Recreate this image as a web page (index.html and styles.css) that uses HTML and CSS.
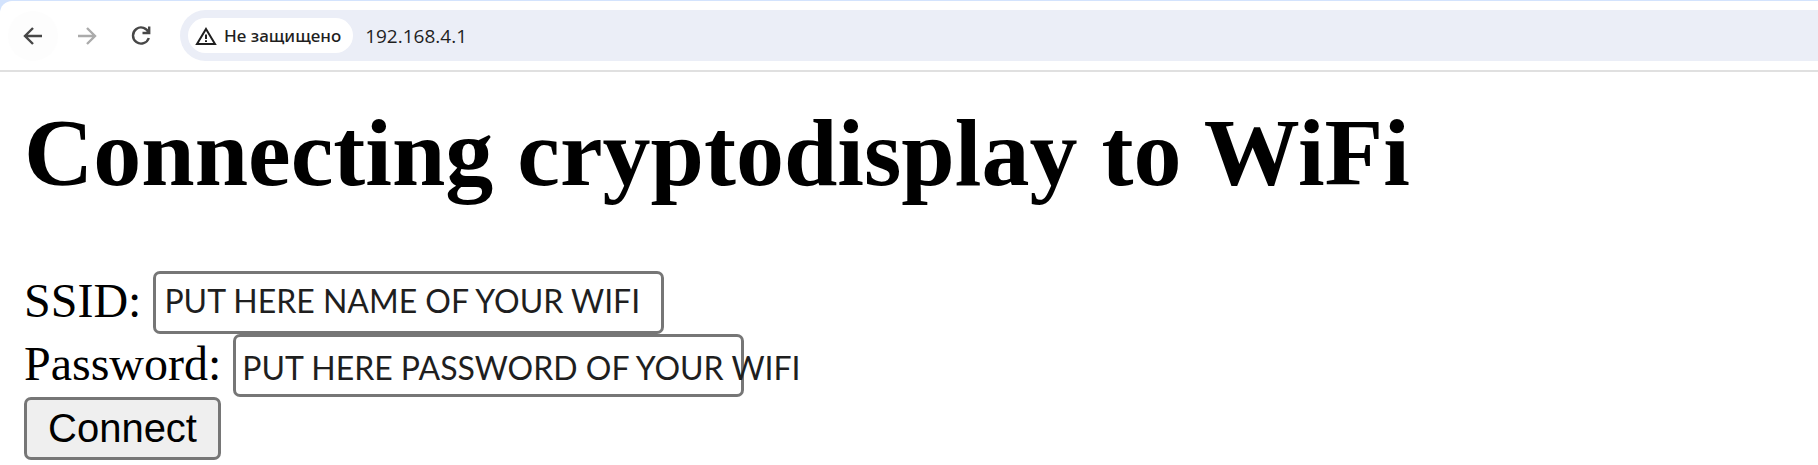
FILE: index.html
```html
<!DOCTYPE html>
<html lang="en">
<head>
<meta charset="utf-8">
<meta name="viewport" content="width=device-width, initial-scale=1">
<title>Connecting cryptodisplay to WiFi</title>
<link rel="stylesheet" href="styles.css">
</head>
<body>
<header class="browser">
  <nav class="toolbar" aria-label="Browser">
    <div class="nav-buttons">
      <button class="nav-button nav-button-current" type="button" aria-label="Back">
        <svg viewBox="0 0 20 20" width="20" height="20"><path d="M19 10H2.500M10 2L2 10l8 8"/></svg>
      </button>
      <button class="nav-button nav-button-off" type="button" aria-label="Forward" disabled>
        <svg viewBox="0 0 20 20" width="20" height="20"><path d="M1 10H17.500M10 2l8 8-8 8"/></svg>
      </button>
      <button class="nav-button" type="button" aria-label="Reload">
        <svg viewBox="0 0 20 20" width="20" height="20"><path d="M17.800 12A8.100 8.100 0 1 1 17.800 7M18.200 .500v6.500H11.500"/></svg>
      </button>
    </div>
    <div class="address">
      <button class="chip" type="button">
        <svg viewBox="0 0 22 18" width="22" height="18"><path d="M11 2L20 17H2Z"/><path d="M11 7.500v4.500M11 13.200v1.800"/></svg>
        <span lang="ru">Не защищено</span>
      </button>
      <input class="url" type="text" value="192.168.4.1" aria-label="Address">
    </div>
  </nav>
</header>
<main class="page">
  <h1 class="title">Connecting cryptodisplay to WiFi</h1>
  <form class="form">
    <div class="row">
      <label class="label" for="ssid">SSID:</label>
      <input class="field" id="ssid" type="text" value="PUT HERE NAME OF YOUR WIFI">
    </div>
    <div class="row">
      <label class="label" for="password">Password:</label>
      <div class="field-box">
        <input class="field" id="password" type="text" aria-describedby="password-note">
        <span class="note" id="password-note">PUT HERE PASSWORD OF YOUR WIFI</span>
      </div>
    </div>
    <button class="connect" type="button">Connect</button>
  </form>
</main>
</body>
</html>
```
FILE: styles.css
```css
* { box-sizing: border-box; }

body {
  margin: 0;
  background: #fff;
  color: #000;
  font-family: "Liberation Serif", "Times New Roman", serif;
  font-size: 48px;
}

.browser {
  padding-top: 1px;
  background: #d3e3fd;
}

.toolbar {
  display: flex;
  align-items: center;
  gap: 14px;
  padding: 9px 0 9px 8px;
  background: #fff;
  border-bottom: 2px solid #e0e0e0;
  border-top-left-radius: 12px;
}

.nav-buttons {
  display: flex;
  gap: 4px;
}

.nav-button {
  display: flex;
  align-items: center;
  justify-content: center;
  width: 50px;
  height: 50px;
  padding: 0;
  border: 0;
  border-radius: 50%;
  background: transparent;
  color: #474747;
}

.nav-button-current { background: #fdfdfd; }
.nav-button-off { color: #ababab; }

svg {
  flex: none;
  fill: none;
  stroke: currentColor;
  stroke-width: 2;
}

.nav-button svg { stroke-width: 2.4; }

.address {
  display: flex;
  flex: 1;
  align-items: center;
  gap: 12px;
  height: 51px;
  padding-left: 8px;
  background: #ebeef7;
  border-radius: 26px 0 0 26px;
}

.chip {
  display: flex;
  align-items: center;
  gap: 7px;
  height: 35px;
  padding: 0 12px 0 7px;
  border: 0;
  border-radius: 18px;
  background: #fff;
  color: #1f1f1f;
  font: 500 17px "Noto Sans", sans-serif;
}

.url {
  flex: 1;
  min-width: 0;
  padding: 0;
  border: 0;
  background: transparent;
  color: #1f1f1f;
  font: 19px "Open Sans", sans-serif;
}

.page { padding: 26px 24px 0; }

.title {
  margin: 0;
  font-size: 96px;
  line-height: 110px;
}

.form { margin-top: 63px; }

.row {
  display: flex;
  align-items: center;
  gap: 12px;
}

.label { padding-bottom: 5px; }

.field {
  display: block;
  width: 511px;
  max-width: 100%;
  height: 63px;
  padding: 0 8px 4px;
  border: 3px solid #767676;
  border-radius: 7px;
  background: #fff;
  color: #1f1f1f;
  font: 32px Lato, sans-serif;
}

.field-box { position: relative; }

.note {
  position: absolute;
  top: 14px;
  left: 9px;
  color: #1f1f1f;
  font: 32px/40px Lato, sans-serif;
  white-space: nowrap;
  pointer-events: none;
}

.connect {
  display: block;
  height: 63px;
  padding: 0 21px;
  border: 3px solid #767676;
  border-radius: 7px;
  background: #efefef;
  color: #000;
  font: 40px "Liberation Sans", Arial, sans-serif;
}
```
